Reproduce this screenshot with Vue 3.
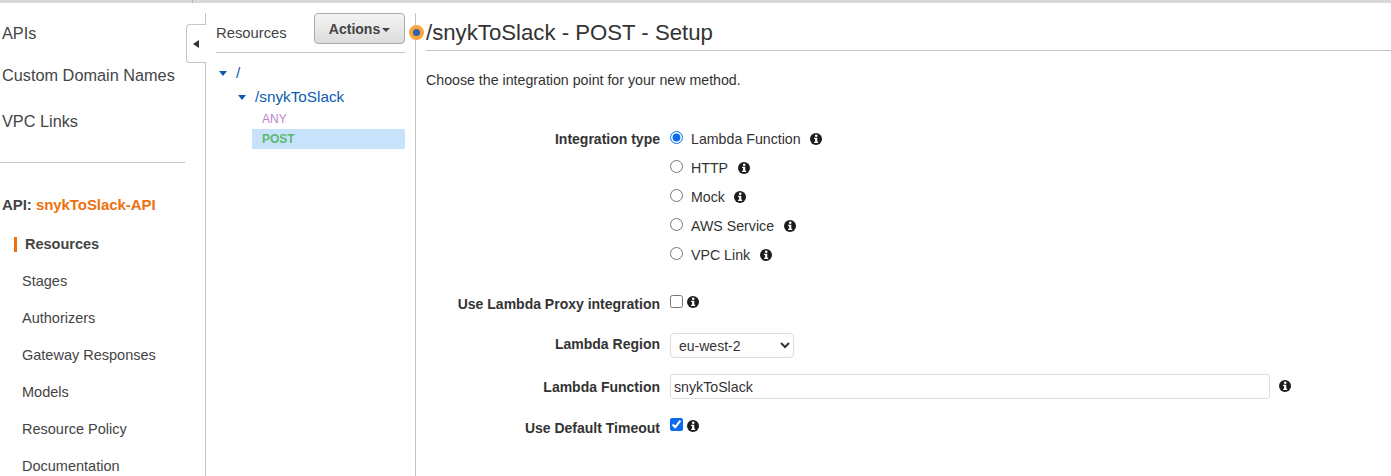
<template>
  <div class="page">
    <div class="topbar"><span class="tick"></span></div>
    <div class="columns">
      <aside class="nav">
        <a class="nav-top first">APIs</a>
        <a class="nav-top second">Custom Domain Names</a>
        <a class="nav-top third">VPC Links</a>
        <hr class="nav-rule" />
        <div class="api-name">API: <span>snykToSlack-API</span></div>
        <ul class="nav-list">
          <li v-for="(item, index) in navItems" :key="item" :class="{ active: index === 0 }">{{ item }}</li>
        </ul>
        <button class="collapse" aria-label="Collapse">
          <svg width="6" height="8" viewBox="0 0 6 8"><path d="M6 0v8L0 4z" fill="#333" /></svg>
        </button>
      </aside>

      <section class="tree">
        <div class="tree-head">
          <span class="tree-title">Resources</span>
          <button class="actions">Actions<i class="caret"></i></button>
        </div>
        <div class="tree-row root"><i class="arrow"></i><a>/</a></div>
        <div class="tree-row child"><i class="arrow"></i><a>/snykToSlack</a></div>
        <div class="method any">ANY</div>
        <div class="method post">POST</div>
      </section>

      <main class="main">
        <span class="dot"></span>
        <h1 class="title">/snykToSlack - POST - Setup</h1>
        <p class="intro">Choose the integration point for your new method.</p>

        <div class="form">
          <div class="field types">
            <label class="label">Integration type</label>
            <div class="radios">
              <div v-for="(type, index) in types" :key="type" class="radio-row">
                <input type="radio" name="type" :checked="index === 0" />
                <span class="radio-text">{{ type }}</span>
                <svg class="info" viewBox="0 0 12 12"><use href="#info-icon" /></svg>
              </div>
            </div>
          </div>

          <div class="field proxy">
            <label class="label">Use Lambda Proxy integration</label>
            <input type="checkbox" />
            <svg class="info tight" viewBox="0 0 12 12"><use href="#info-icon" /></svg>
          </div>

          <div class="field region">
            <label class="label">Lambda Region</label>
            <select class="select"><option>eu-west-2</option></select>
          </div>

          <div class="field function">
            <label class="label">Lambda Function</label>
            <input class="text-input" type="text" value="snykToSlack" />
            <svg class="info wide" viewBox="0 0 12 12"><use href="#info-icon" /></svg>
          </div>

          <div class="field timeout">
            <label class="label">Use Default Timeout</label>
            <input type="checkbox" checked />
            <svg class="info tight" viewBox="0 0 12 12"><use href="#info-icon" /></svg>
          </div>
        </div>
      </main>
    </div>

    <svg class="defs" width="0" height="0">
      <symbol id="info-icon" viewBox="0 0 12 12">
        <circle cx="6" cy="6" r="6" fill="#1c1c1c" />
        <circle cx="6.2" cy="2.8" r="1.3" fill="#fff" />
        <path d="M4.1 4.8h3.2v4h.9v1.3H4.1V8.8h1V6.1h-1z" fill="#fff" />
      </symbol>
    </svg>
  </div>
</template>

<script setup>
const navItems = [
  'Resources',
  'Stages',
  'Authorizers',
  'Gateway Responses',
  'Models',
  'Resource Policy',
  'Documentation',
];

const types = ['Lambda Function', 'HTTP', 'Mock', 'AWS Service', 'VPC Link'];
</script>

<style>
html, body {
  margin: 0;
  background: #fff;
  overflow: hidden;
}
</style>

<style scoped>
.page {
  height: 476px;
  overflow: hidden;
  font-family: "Liberation Sans", Arial, sans-serif;
  font-size: 14px;
  color: #333;
  background: #fff;
}

.topbar {
  height: 3px;
  background: #d9d9d9;
  position: relative;
}

.tick {
  position: absolute;
  left: 192px;
  top: 0;
  width: 1px;
  height: 3px;
  background: #bbb;
}

.columns {
  display: flex;
  margin-top: 10px;
  height: 463px;
}

.nav {
  width: 205px;
  flex: none;
  border-right: 1px solid #c4c4c4;
  position: relative;
}

.nav-top {
  display: block;
  padding-left: 2px;
  font-size: 16.3px;
  line-height: 20px;
  color: #444;
}

.first { margin-top: 10px; }
.second { margin-top: 22px; }
.third { margin-top: 26px; }

.nav-rule {
  width: 185px;
  margin: 31px 0 0;
  border: 0;
  border-top: 1px solid #c4c4c4;
}

.api-name {
  margin-top: 32px;
  padding-left: 2px;
  font-size: 15px;
  line-height: 20px;
  font-weight: bold;
  letter-spacing: -0.06px;
  color: #444;
}

.api-name span {
  color: #ec7211;
}

.nav-list {
  list-style: none;
  margin: 19px 0 0;
  padding: 0;
}

.nav-list li {
  height: 37px;
  line-height: 20px;
  padding-left: 22px;
  font-size: 14.5px;
  color: #444;
}

.nav-list li.active {
  position: relative;
  padding-left: 25px;
  font-weight: bold;
}

.nav-list li.active::before {
  content: "";
  position: absolute;
  left: 14px;
  top: 3px;
  width: 3px;
  height: 15px;
  background: #ec7211;
}

.collapse {
  position: absolute;
  left: 186px;
  top: 11px;
  width: 20px;
  height: 39px;
  background: #fff;
  border: 1px solid #c4c4c4;
  border-right: 0;
  border-radius: 4px 0 0 4px;
  display: flex;
  align-items: center;
  justify-content: flex-start;
  padding: 0 0 0 6px;
  box-sizing: border-box;
}

.tree {
  width: 189px;
  flex: none;
  padding: 0 10px;
  border-right: 1px solid #c4c4c4;
}

.tree-head {
  display: flex;
  justify-content: space-between;
  height: 39px;
  border-bottom: 1px solid #c4c4c4;
}

.tree-title {
  margin-top: 11px;
  font-size: 14.8px;
  line-height: 18px;
  color: #444;
}

.actions {
  width: 91px;
  height: 31px;
  padding: 0;
  font: bold 14px "Liberation Sans", Arial, sans-serif;
  color: #444;
  background: linear-gradient(#f4f4f4, #dcdcdc);
  border: 1px solid #aaa;
  border-radius: 4px;
  display: flex;
  align-items: center;
  justify-content: center;
}

.caret {
  width: 0;
  height: 0;
  margin-left: 2px;
  margin-top: 2px;
  border-left: 4px solid transparent;
  border-right: 4px solid transparent;
  border-top: 4px solid #444;
}

.tree-row {
  display: flex;
  align-items: center;
  font-size: 15.3px;
  line-height: 18px;
  color: #0b5cad;
}

.root {
  margin-top: 11px;
  padding-left: 3px;
}

.child {
  margin-top: 6px;
  padding-left: 22px;
}

.arrow {
  width: 0;
  height: 0;
  margin-right: 9px;
  border-left: 4.5px solid transparent;
  border-right: 4.5px solid transparent;
  border-top: 5px solid #0b5cad;
}

.method {
  margin-left: 36px;
  padding-left: 10px;
  height: 20px;
  line-height: 20px;
  font-size: 12px;
}

.any {
  margin-top: 3px;
  color: #bf80d3;
}

.post {
  font-weight: bold;
  color: #5cb86f;
  background: #c7e3fc;
}

.main {
  flex: 1;
  position: relative;
  padding: 0 0 0 10px;
}

.dot {
  position: absolute;
  left: -7px;
  top: 12px;
  width: 7px;
  height: 7px;
  border-radius: 50%;
  background: #2f62b0;
  border: 4px solid #f8a53e;
}

.title {
  margin: 0;
  height: 37px;
  font-size: 22.2px;
  font-weight: normal;
  line-height: 40px;
  color: #333;
  border-bottom: 1px solid #c4c4c4;
}

.intro {
  margin: 20px 0 0;
  font-size: 14.2px;
  line-height: 18px;
  color: #333;
}

.form {
  margin-top: 40px;
}

.field {
  display: flex;
  align-items: flex-start;
}

.label {
  width: 234px;
  flex: none;
  margin-right: 10px;
  text-align: right;
  font-size: 14px;
  font-weight: bold;
  line-height: 20px;
  color: #333;
}

.radio-row {
  display: flex;
  align-items: center;
  height: 20px;
  margin-bottom: 9px;
}

.radio-row input {
  width: 13px;
  height: 13px;
  margin: 0 8px 3px 0;
  accent-color: #0b6cf0;
}

.radio-text {
  font-size: 14.2px;
  margin-right: 9.5px;
}

.info {
  width: 12px;
  height: 12px;
  flex: none;
}

.proxy { margin-top: 19px; }
.region { margin-top: 20px; }
.function { margin-top: 16px; }
.timeout { margin-top: 18px; }

.proxy .label,
.timeout .label {
  margin-top: 1px;
}

.proxy input {
  width: 13px;
  height: 13px;
  margin: 2px 4px 0 0;
  accent-color: #0b6cf0;
}

.timeout input {
  width: 13px;
  height: 13px;
  margin: 1px 4px 0 0;
  accent-color: #0b6cf0;
}

.tight {
  margin-top: 3px;
}

.select {
  width: 124px;
  height: 25px;
  margin-top: -1px;
  padding: 1px 0 0 4px;
  font: 14px "Liberation Sans", Arial, sans-serif;
  color: #333;
  background: #fff;
  border: 1px solid #ddd;
  border-radius: 4px;
}

.function .label {
  margin-top: 3px;
}

.text-input {
  width: 600px;
  height: 25px;
  box-sizing: border-box;
  padding: 0 3px;
  font: 14.2px "Liberation Sans", Arial, sans-serif;
  color: #333;
  border: 1px solid #ddd;
  border-radius: 3px;
}

.wide {
  margin: 6px 0 0 9px;
}

.defs {
  position: absolute;
}
</style>
